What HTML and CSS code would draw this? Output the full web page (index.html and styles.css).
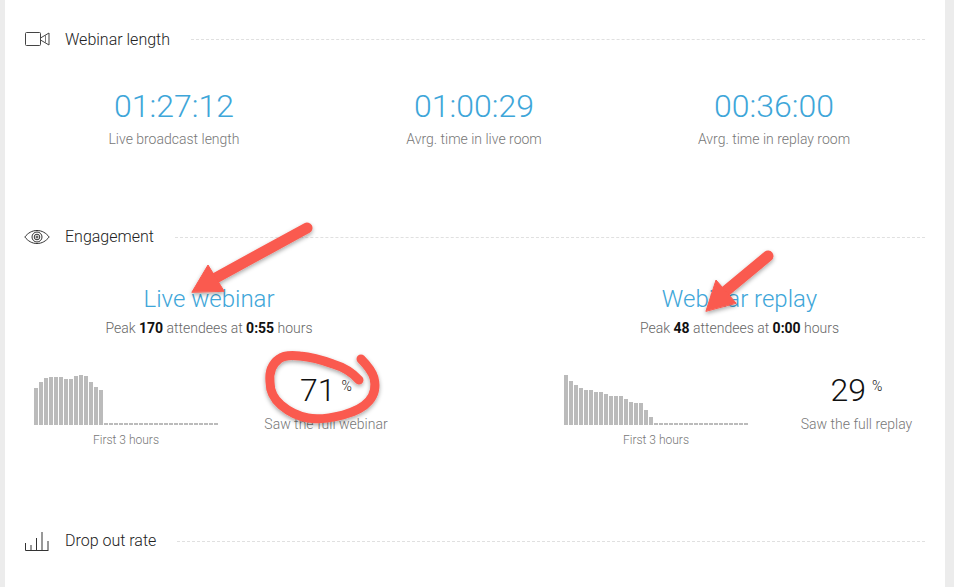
FILE: index.html
```html
<!DOCTYPE html>
<html lang="en">
  <head>
    <meta charset="UTF-8" />
    <meta name="viewport" content="width=device-width, initial-scale=1.0" />
    <title>Webinar stats</title>
    <link rel="stylesheet" href="styles.css">
  </head>
  <body>
    <div class="panel">
      <div class="section section--length">
        <div class="section__head">
          <svg class="section__icon" width="26" height="16" viewBox="0 0 26 16" fill="none" stroke="#444" stroke-width="1">
            <rect x="1.500" y="1.500" width="15" height="13" rx="1" />
            <path d="M16.500 7L25 2v12L16.500 9" />
            <path d="M21.500 4.500v7" stroke-width=".7" />
          </svg>
          <h2 class="section__title">Webinar length</h2>
          <div class="section__line"></div>
        </div>
        <div class="times">
          <div class="time">
            <div class="time__value">01:27:12</div>
            <div class="time__label">Live broadcast length</div>
          </div>
          <div class="time">
            <div class="time__value">01:00:29</div>
            <div class="time__label">Avrg. time in live room</div>
          </div>
          <div class="time">
            <div class="time__value">00:36:00</div>
            <div class="time__label">Avrg. time in replay room</div>
          </div>
        </div>
      </div>

      <div class="section section--engagement">
        <div class="section__head">
          <svg class="section__icon" width="26" height="16" viewBox="0 0 26 16" fill="none" stroke="#333" stroke-width="1">
            <path d="M.800 8C4 4 8 1.500 13 1.500S22 4 25.200 8C22 12 18 14.500 13 14.500S4 12 .800 8z" />
            <circle cx="13" cy="8" r="5" />
            <circle cx="13" cy="8" r="2.800" />
            <circle cx="13" cy="8" r="1" />
          </svg>
          <h2 class="section__title">Engagement</h2>
          <div class="section__line"></div>
        </div>
        <div class="rooms">
          <div class="room">
            <h3 class="room__title">Live webinar</h3>
            <p class="room__peak">Peak <b>170</b> attendees at <b>0:55</b> hours</p>
            <div class="room__body">
              <div class="chart">
                <div class="chart__bars">
                  <span style="height:37px"></span><span style="height:43px"></span><span style="height:47px"></span><span style="height:48px"></span><span style="height:48px"></span><span style="height:48px"></span><span style="height:46px"></span><span style="height:46px"></span><span style="height:49px"></span><span style="height:50px"></span><span style="height:49px"></span><span style="height:43px"></span><span style="height:38px"></span><span style="height:35px"></span>
                  <span></span><span></span><span></span><span></span><span></span><span></span><span></span><span></span><span></span><span></span><span></span><span></span><span></span><span></span><span></span><span></span><span></span><span></span><span></span><span></span><span></span><span></span><span></span>
                </div>
                <div class="chart__label">First 3 hours</div>
              </div>
              <div class="share">
                <div class="share__value">71<sup class="share__unit">%</sup></div>
                <div class="share__label">Saw the full webinar</div>
              </div>
            </div>
          </div>
          <div class="room">
            <h3 class="room__title">Webinar replay</h3>
            <p class="room__peak">Peak <b>48</b> attendees at <b>0:00</b> hours</p>
            <div class="room__body">
              <div class="chart">
                <div class="chart__bars">
                  <span style="height:50px"></span><span style="height:44px"></span><span style="height:40px"></span><span style="height:37px"></span><span style="height:35px"></span><span style="height:35px"></span><span style="height:33px"></span><span style="height:33px"></span><span style="height:31px"></span><span style="height:29px"></span><span style="height:29px"></span><span style="height:29px"></span><span style="height:26px"></span><span style="height:23px"></span><span style="height:22px"></span><span style="height:22px"></span><span style="height:15px"></span><span style="height:8px"></span>
                  <span></span><span></span><span></span><span></span><span></span><span></span><span></span><span></span><span></span><span></span><span></span><span></span><span></span><span></span><span></span><span></span><span></span><span></span><span></span>
                </div>
                <div class="chart__label">First 3 hours</div>
              </div>
              <div class="share">
                <div class="share__value">29<sup class="share__unit">%</sup></div>
                <div class="share__label">Saw the full replay</div>
              </div>
            </div>
          </div>
        </div>
      </div>

      <div class="section section--dropout">
        <div class="section__head">
          <svg class="section__icon" width="26" height="20" viewBox="0 0 26 20" fill="none" stroke="#333" stroke-width="1">
            <path d="M1.500 12v7.500h23M24 10v9M7 14v5M12.500 7v12M18 1v18" />
          </svg>
          <h2 class="section__title">Drop out rate</h2>
          <div class="section__line"></div>
        </div>
      </div>
    </div>

    <!-- red marks drawn on top of the screenshot -->
    <svg class="marks" width="954" height="587" viewBox="0 0 954 587">
      <defs>
        <filter id="mark-shadow" x="-20%" y="-20%" width="140%" height="140%">
          <feDropShadow dx="0" dy="2" stdDeviation="2" flood-color="#000" flood-opacity="0.35" />
        </filter>
      </defs>
      <g filter="url(#mark-shadow)" fill="#fa5a4f" stroke="#fa5a4f" stroke-linecap="round" stroke-linejoin="round">
        <path d="M307 228L212 280" fill="none" stroke-width="11" />
        <path d="M192 292L208 265L224 291z" stroke-width="1" />
        <path d="M768 256L721 295" fill="none" stroke-width="11" />
        <path d="M706 311L716 280L736 303z" stroke-width="1" />
        <path d="M359 380C352 372 343 367 333 364C322 360 311 357 300 356C292 355 284 355 279 359C272 364 269 372 270 382C270 392 274 399 281 405C288 411 297 416 308 418C319 420 331 418 343 415C354 412 363 408 369 401C375 394 376 386 374 378C372 371 366 364 361 359" fill="none" stroke-width="9" />
      </g>
    </svg>
  </body>
</html>
```

FILE: styles.css
```css
* {
  box-sizing: border-box;
}

body {
  margin: 0;
  height: 587px;
  overflow: hidden;
  background: #ececec;
  font-family: Roboto, sans-serif;
  position: relative;
}

.panel {
  width: 940px;
  height: 587px;
  margin-left: 5px;
  padding: 0 20px 0 19px;
  background: white;
  overflow: hidden;
}

.section--length {
  padding-top: 29px;
  height: 227px;
}

.section--length .section__title {
  margin-bottom: 0;
}

.section--engagement {
  height: 304px;
}

.section__head {
  display: flex;
  align-items: center;
  height: 20px;
}

.section__icon {
  flex-shrink: 0;
}

.section__title {
  margin: 0 21px 2px 15px;
  font-size: 16px;
  font-weight: 300;
  color: #222;
}

.section__line {
  flex: 1;
  border-top: 1px dashed #e0e0e0;
}

.times {
  display: grid;
  grid-template-columns: repeat(3, 300px);
  margin-top: 38px;
  text-align: center;
}

.time__value {
  font-size: 32px;
  font-weight: 300;
  line-height: 38px;
  color: #3ea6d9;
}

.time__label {
  margin-top: 6px;
  font-size: 14px;
  font-weight: 300;
  line-height: 16px;
  color: #777;
}

.rooms {
  display: grid;
  grid-template-columns: 370px 371px;
  column-gap: 160px;
  margin-top: 37px;
}

.room__title {
  margin: 0;
  font-size: 24px;
  font-weight: 300;
  line-height: 30px;
  text-align: center;
  color: #3ea6d9;
}

.room__peak {
  margin: 6px 0 0;
  font-size: 14px;
  font-weight: 300;
  line-height: 16px;
  text-align: center;
  color: #666;
}

.room__peak b {
  font-weight: 700;
  color: #111;
}

.room__body {
  display: flex;
  margin-top: 25px;
  padding-left: 10px;
}

.chart {
  width: 184px;
  margin-right: 40px;
  flex-shrink: 0;
}

.chart__bars {
  display: flex;
  align-items: flex-end;
  gap: 1px;
  height: 64px;
}

.chart__bars span {
  width: 4px;
  height: 2px;
  flex-shrink: 0;
  background: #bbb;
}

.chart__label {
  margin-top: 8px;
  font-size: 12px;
  font-weight: 300;
  line-height: 14px;
  text-align: center;
  color: #777;
}

.share {
  flex: 1;
  padding-top: 11px;
  text-align: center;
}

.share__value {
  font-size: 32px;
  font-weight: 300;
  line-height: 36px;
  color: #111;
}

.share__unit {
  margin-left: 6px;
  font-size: 14px;
  vertical-align: 10px;
  line-height: 0;
}

.share__label {
  margin-top: 8px;
  font-size: 14px;
  font-weight: 300;
  line-height: 16px;
  color: #777;
}

.marks {
  position: absolute;
  top: 0;
  left: 0;
}
```
